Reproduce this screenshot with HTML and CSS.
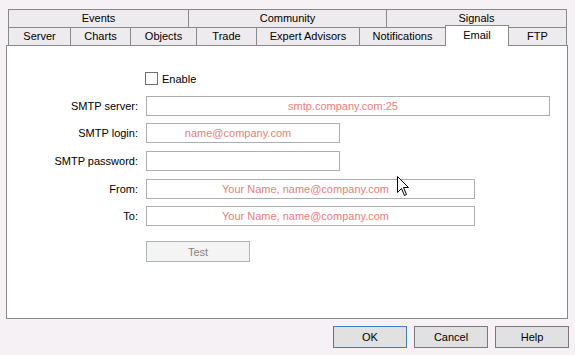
FILE: index.html
```html
<!DOCTYPE html>
<html lang="en">
<head>
    <meta charset="UTF-8">
    <title>Options - Email</title>
    <link rel="stylesheet" href="styles.css">
</head>
<body>
    <div class="window">
        <!-- Tab strip, two rows -->
        <div class="tabs">
            <div class="tab-row">
                <div class="tab w-events">Events</div>
                <div class="tab w-community">Community</div>
                <div class="tab w-signals">Signals</div>
            </div>
            <div class="tab-row">
                <div class="tab w-server">Server</div>
                <div class="tab w-charts">Charts</div>
                <div class="tab w-objects">Objects</div>
                <div class="tab w-trade">Trade</div>
                <div class="tab w-experts">Expert Advisors</div>
                <div class="tab w-notify">Notifications</div>
                <div class="tab w-email active">Email</div>
                <div class="tab w-ftp">FTP</div>
            </div>
        </div>

        <!-- Email page -->
        <div class="panel">
            <form class="email-form">
                <div class="row check-row">
                    <span class="label"></span>
                    <label class="check"><span class="box"></span>Enable</label>
                </div>
                <div class="row">
                    <span class="label">SMTP server:</span>
                    <input class="field f-long" type="text" placeholder="smtp.company.com:25">
                </div>
                <div class="row">
                    <span class="label">SMTP login:</span>
                    <input class="field f-short" type="text" placeholder="name@company.com">
                </div>
                <div class="row push">
                    <span class="label">SMTP password:</span>
                    <input class="field f-short" type="password">
                </div>
                <div class="row push">
                    <span class="label">From:</span>
                    <input class="field f-mid" type="text" placeholder="Your Name, name@company.com">
                </div>
                <div class="row">
                    <span class="label">To:</span>
                    <input class="field f-mid" type="text" placeholder="Your Name, name@company.com">
                </div>
                <div class="row test-row">
                    <span class="label"></span>
                    <button class="test-btn" type="button" disabled>Test</button>
                </div>
            </form>
        </div>

        <!-- Dialog buttons -->
        <div class="buttons">
            <button class="btn default" type="button">OK</button>
            <button class="btn" type="button">Cancel</button>
            <button class="btn" type="button">Help</button>
        </div>

        <!-- mouse pointer -->
        <svg class="pointer" width="13" height="21" viewBox="0 0 13 21">
            <path d="M0.5 0.5 L0.5 16.5 L4.5 12.5 L7.5 19.5 L9.5 18.5 L6.5 11.5 L11.5 11.5 Z" fill="#fff" stroke="#000" stroke-width="1"/>
        </svg>
    </div>
</body>
</html>
```

FILE: styles.css
```css
/* Base */
body {
    margin: 0;
    background-color: #f5f1f4;
    font-family: "Liberation Sans", Arial, sans-serif;
    font-size: 11px;
    color: #000;
}

.window {
    position: relative;
    width: 575px;
    height: 355px;
    overflow: hidden;
}

/* Tabs */
.tabs {
    padding-top: 9px;
    margin-left: 8px;
}

.tab-row {
    display: flex;
    align-items: flex-end;
    height: 18px;
}

.tab {
    box-sizing: border-box;
    height: 18px;
    line-height: 17px;
    text-align: center;
    background-color: #eeebee;
    border: 1px solid #898989;
    border-bottom: none;
    margin-right: -1px;
}

.tab.active {
    position: relative;
    z-index: 2;
    height: 21px;
    line-height: 18px;
    margin-bottom: -1px;
    background-color: #fff;
}

.w-events { width: 181px; }
.w-community { width: 199px; }
.w-signals { width: 181px; }
.w-server { width: 63px; }
.w-charts { width: 61px; }
.w-objects { width: 67px; }
.w-trade { width: 61px; }
.w-experts { width: 104px; }
.w-notify { width: 87px; }
.w-email { width: 64px; }
.w-ftp { width: 59px; }

/* Page panel */
.panel {
    position: relative;
    box-sizing: border-box;
    margin-left: 6px;
    width: 562px;
    height: 274px;
    background-color: #fff;
    border: 1px solid #898989;
}

.email-form {
    display: flex;
    flex-direction: column;
    gap: 7px;
    padding-top: 26px;
}

.row {
    display: flex;
    align-items: center;
    gap: 8px;
    height: 20px;
}

.row.push {
    margin-top: 1px;
}

.check-row {
    height: 13px;
    margin-bottom: 4px;
}

.test-row {
    height: 21px;
    margin-top: 8px;
}

.label {
    width: 131px;
    flex-shrink: 0;
    text-align: right;
}

/* Checkbox */
.check {
    display: flex;
    align-items: center;
    gap: 4px;
    margin-left: -1px;
}

.check .box {
    box-sizing: border-box;
    width: 13px;
    height: 13px;
    border: 1px solid #707070;
    background-color: #fff;
}

/* Text fields */
.field {
    box-sizing: border-box;
    height: 20px;
    margin: 0;
    padding: 0 10px 0 0;
    border: 1px solid #abadb3;
    background-color: #fff;
    font-family: "Liberation Sans", Arial, sans-serif;
    font-size: 11px;
    text-align: center;
    outline: none;
}

.field::placeholder {
    color: #f07c7c;
}

.f-long { width: 404px; }
.f-short { width: 194px; }
.f-mid { width: 329px; }

.test-btn {
    box-sizing: border-box;
    width: 104px;
    height: 21px;
    margin: 0;
    border: 1px solid #adb2b5;
    background-color: #f4f4f4;
    color: #838383;
    font-family: "Liberation Sans", Arial, sans-serif;
    font-size: 11px;
}

/* Dialog buttons */
.buttons {
    display: flex;
    justify-content: flex-end;
    gap: 7px;
    margin-top: 7px;
    padding-right: 6px;
}

.btn {
    box-sizing: border-box;
    width: 74px;
    height: 22px;
    margin: 0;
    border: 1px solid #7a7a7a;
    background-color: #e1e1e1;
    color: #000;
    font-family: "Liberation Sans", Arial, sans-serif;
    font-size: 11px;
}

.btn.default {
    border-color: #3c7fc0;
}

/* Mouse pointer over the page */
.pointer {
    position: absolute;
    left: 397px;
    top: 176px;
    z-index: 5;
}
```
